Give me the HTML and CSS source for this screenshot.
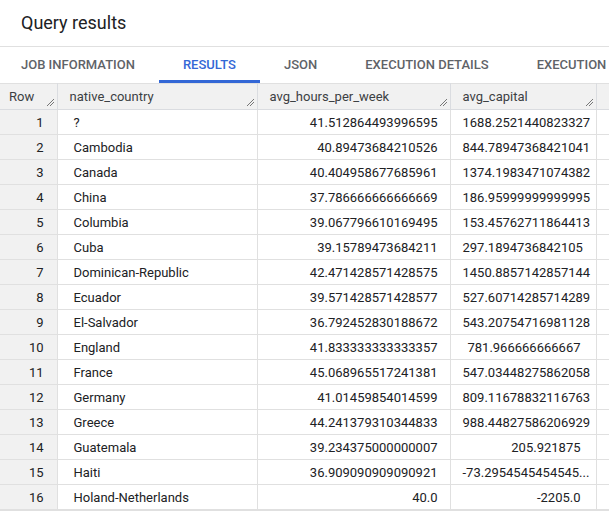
FILE: index.html
```
<!DOCTYPE html>
<html>
<head>
<meta charset="utf-8">
<link rel="stylesheet" href="styles.css">
</head>
<body>
<div class="page">
  <h1 class="title">Query results</h1>
  <nav class="tabs">
    <div class="tab">JOB INFORMATION</div>
    <div class="tab active">RESULTS</div>
    <div class="tab">JSON</div>
    <div class="tab">EXECUTION DETAILS</div>
    <div class="tab">EXECUTION GRAPH</div>
  </nav>
  <table class="grid">
    <colgroup>
      <col class="c-row"><col class="c-country"><col class="c-hours"><col class="c-cap"><col class="c-rest">
    </colgroup>
    <thead>
      <tr>
        <th class="h-row">Row<span class="grip"></span></th>
        <th>native_country<span class="grip"></span></th>
        <th>avg_hours_per_week<span class="grip"></span></th>
        <th>avg_capital<span class="grip"></span></th>
        <th class="h-rest"></th>
      </tr>
    </thead>
    <tbody>
      <tr><td class="rn">1</td><td class="txt">?</td><td class="num">41.512864493996595</td><td class="cap">1688.2521440823327</td><td class="rest"></td></tr>
      <tr><td class="rn">2</td><td class="txt">Cambodia</td><td class="num">40.89473684210526</td><td class="cap">844.78947368421041</td><td class="rest"></td></tr>
      <tr><td class="rn">3</td><td class="txt">Canada</td><td class="num">40.404958677685961</td><td class="cap">1374.1983471074382</td><td class="rest"></td></tr>
      <tr><td class="rn">4</td><td class="txt">China</td><td class="num">37.786666666666669</td><td class="cap">186.95999999999995</td><td class="rest"></td></tr>
      <tr><td class="rn">5</td><td class="txt">Columbia</td><td class="num">39.067796610169495</td><td class="cap">153.45762711864413</td><td class="rest"></td></tr>
      <tr><td class="rn">6</td><td class="txt">Cuba</td><td class="num">39.15789473684211</td><td class="cap">297.1894736842105</td><td class="rest"></td></tr>
      <tr><td class="rn">7</td><td class="txt">Dominican-Republic</td><td class="num">42.471428571428575</td><td class="cap">1450.8857142857144</td><td class="rest"></td></tr>
      <tr><td class="rn">8</td><td class="txt">Ecuador</td><td class="num">39.571428571428577</td><td class="cap">527.60714285714289</td><td class="rest"></td></tr>
      <tr><td class="rn">9</td><td class="txt">El-Salvador</td><td class="num">36.792452830188672</td><td class="cap">543.20754716981128</td><td class="rest"></td></tr>
      <tr><td class="rn">10</td><td class="txt">England</td><td class="num">41.833333333333357</td><td class="cap">781.966666666667</td><td class="rest"></td></tr>
      <tr><td class="rn">11</td><td class="txt">France</td><td class="num">45.068965517241381</td><td class="cap">547.03448275862058</td><td class="rest"></td></tr>
      <tr><td class="rn">12</td><td class="txt">Germany</td><td class="num">41.01459854014599</td><td class="cap">809.11678832116763</td><td class="rest"></td></tr>
      <tr><td class="rn">13</td><td class="txt">Greece</td><td class="num">44.241379310344833</td><td class="cap">988.44827586206929</td><td class="rest"></td></tr>
      <tr><td class="rn">14</td><td class="txt">Guatemala</td><td class="num">39.234375000000007</td><td class="cap">205.921875</td><td class="rest"></td></tr>
      <tr><td class="rn">15</td><td class="txt">Haiti</td><td class="num">36.909090909090921</td><td class="cap">-73.2954545454545...</td><td class="rest"></td></tr>
      <tr><td class="rn">16</td><td class="txt">Holand-Netherlands</td><td class="num">40.0</td><td class="cap">-2205.0</td><td class="rest"></td></tr>
    </tbody>
  </table>
</div>
</body>
</html>
```
FILE: styles.css
```
html, body {
  margin: 0;
  padding: 0;
  background: #ffffff;
}
.page {
  width: 609px;
  overflow: hidden;
  font-family: Roboto, "Liberation Sans", Arial, sans-serif;
  color: #202124;
}
.title {
  margin: 0;
  height: 47px;
  box-sizing: border-box;
  padding: 11px 0 0 21px;
  font-size: 18px;
  font-weight: 400;
  line-height: 24px;
  color: #202124;
  border-bottom: 1px solid #e0e0e0;
}
.tabs {
  display: flex;
  height: 36px;
  margin-left: -3px;
  white-space: nowrap;
}
.tab {
  flex: none;
  padding: 0 24px;
  font-size: 13px;
  font-weight: 500;
  letter-spacing: 0;
  line-height: 36px;
  color: #5f6368;
  box-sizing: border-box;
}
.tab.active {
  color: #3367d6;
  border-bottom: 3px solid #3367d6;
  line-height: 36px;
  height: 36px;
}
.grid {
  border-collapse: collapse;
  table-layout: fixed;
  width: 620px;
  font-size: 13px;
}
.c-row { width: 57px; }
.c-country { width: 200px; }
.c-hours { width: 193px; }
.c-cap { width: 146px; }
.grid th {
  position: relative;
  height: 25px;
  padding: 0 12px;
  background: #f1f1f1;
  border: 1px solid #dadce0;
  border-top: 1px solid #e0e0e0;
  font-weight: 400;
  text-align: left;
  color: #3c4043;
  white-space: nowrap;
}
.grid th:first-child { border-left: none; padding-left: 9px; }
.grip {
  position: absolute;
  right: 3px;
  bottom: 3px;
  width: 7px;
  height: 7px;
  background:
    linear-gradient(135deg, transparent 45%, #777 45%, #777 55%, transparent 55%) no-repeat,
    linear-gradient(135deg, transparent 45%, #777 45%, #777 55%, transparent 55%) no-repeat;
  background-size: 7px 7px, 4px 4px;
  background-position: 0 0, 3px 3px;
}
.grid td {
  height: 24px;
  padding: 0 12px;
  border: 1px solid #e0e0e0;
  white-space: nowrap;
  overflow: hidden;
  color: #202124;
}
.grid td:first-child { border-left: none; }
.grid td.rn {
  background: #f1f1f1;
  text-align: right;
  padding-right: 13px;
}
.grid td.txt { padding-left: 16px; }
.grid td.num { text-align: right; padding-right: 12px; }
.grid td.cap { text-align: right; padding-right: 15px; }
.grid td.rest { border-right: none; }
.grid tbody tr:last-child td { border-bottom: 2px solid #e0e0e0; }
```
